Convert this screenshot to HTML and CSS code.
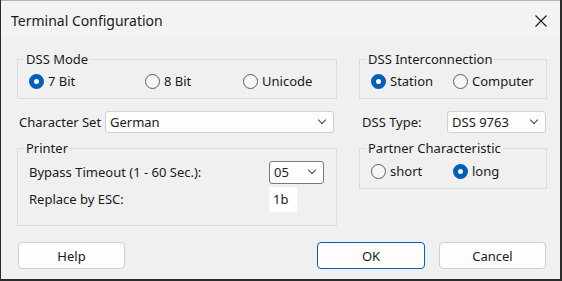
FILE: index.html
```html
<!DOCTYPE html>
<html lang="en">
<head>
    <meta charset="UTF-8">
    <title>Terminal Configuration</title>
    <link rel="stylesheet" href="styles.css">
</head>
<body>
    <div class="window">
        <div class="titlebar">
            <span class="title">Terminal Configuration</span>
            <button class="close" aria-label="Close">
                <svg width="12" height="12" viewBox="0 0 12 12">
                    <path d="M0.5 0.5 L11.5 11.5 M11.5 0.5 L0.5 11.5" stroke="#1a1a1a" stroke-width="1.1" fill="none"/>
                </svg>
            </button>
        </div>

        <div class="dialog">
            <div class="grid">
                <!-- row 1 -->
                <fieldset class="group">
                    <legend>DSS Mode</legend>
                    <div class="radios mode">
                        <label class="radio checked">7 Bit</label>
                        <label class="radio">8 Bit</label>
                        <label class="radio">Unicode</label>
                    </div>
                </fieldset>
                <fieldset class="group">
                    <legend>DSS Interconnection</legend>
                    <div class="radios pair">
                        <label class="radio checked">Station</label>
                        <label class="radio">Computer</label>
                    </div>
                </fieldset>

                <!-- row 2 -->
                <div class="field charset">
                    <span class="label">Character Set</span>
                    <div class="combo wide">German</div>
                </div>
                <div class="field dsstype">
                    <span class="label">DSS Type:</span>
                    <div class="combo short">DSS 9763</div>
                </div>

                <!-- row 3 -->
                <fieldset class="group printer">
                    <legend>Printer</legend>
                    <div class="printer-rows">
                        <span class="label">Bypass Timeout (1 - 60 Sec.):</span>
                        <div class="combo tiny">05</div>
                        <span class="label">Replace by ESC:</span>
                        <div class="edit">1b</div>
                    </div>
                </fieldset>
                <fieldset class="group partner">
                    <legend>Partner Characteristic</legend>
                    <div class="radios pair">
                        <label class="radio">short</label>
                        <label class="radio checked">long</label>
                    </div>
                </fieldset>
            </div>

            <div class="buttons">
                <button class="btn">Help</button>
                <div class="right-buttons">
                    <button class="btn default">OK</button>
                    <button class="btn">Cancel</button>
                </div>
            </div>
        </div>
    </div>
</body>
</html>
```

FILE: styles.css
```css
*, *::before, *::after {
    box-sizing: border-box;
}

body {
    margin: 0;
    background: #2b2b2b;
    font-family: 'Noto Sans', 'Open Sans', sans-serif;
    font-size: 13px;
    line-height: 19px;
    color: #1a1a1a;
}

.window {
    width: 559px;
    height: 279px;
    margin-left: 1px;
    background: #f0f0f0;
    border-top: 1px solid #b5b5b5;
    overflow: hidden;
}

.titlebar {
    height: 36px;
    background: #f3f3f3;
    display: flex;
    align-items: center;
    justify-content: space-between;
    padding-left: 10px;
    padding-right: 13px;
}

.title {
    font-size: 14px;
    padding-top: 2px;
}

.close {
    background: none;
    border: none;
    padding: 0;
    width: 12px;
    height: 12px;
    display: flex;
    margin-top: 3px;
}

.dialog {
    padding: 13px 14px 0 16px;
}

.grid {
    display: grid;
    grid-template-columns: 320px 188px;
    column-gap: 22px;
    align-items: start;
}

.group {
    margin: 0;
    border: 1px solid #dcdcdc;
    padding: 3px 11px 7px;
    min-width: 0;
}

.group legend {
    padding: 0 2px;
    margin-left: -5px;
}

.radios {
    display: grid;
}

.radios.mode {
    grid-template-columns: 116px 98px auto;
}

.radios.pair {
    grid-template-columns: 82px auto;
}

.radio {
    display: inline-flex;
    align-items: center;
    gap: 4px;
}

.radio::before {
    content: "";
    width: 15px;
    height: 15px;
    border-radius: 50%;
    border: 1px solid #5d5d5d;
    background: #f6f6f6;
    flex-shrink: 0;
}

.radio.checked::before {
    border: 5px solid #005fb8;
    background: #ffffff;
}

.field {
    display: flex;
    align-items: center;
    margin-top: 12px;
}

.charset .label {
    width: 88px;
    padding-left: 2px;
    white-space: nowrap;
}

.dsstype .label {
    width: 88px;
    padding-left: 3px;
}

.combo {
    position: relative;
    height: 22px;
    background: #fdfdfd;
    border: 1px solid #d0d0d0;
    border-radius: 3px;
    padding-left: 4px;
    display: flex;
    align-items: center;
}

.combo::after {
    content: "";
    position: absolute;
    right: 8px;
    top: 5px;
    width: 6px;
    height: 6px;
    border-right: 1px solid #444;
    border-bottom: 1px solid #444;
    transform: rotate(45deg);
}

.combo.wide {
    width: 229px;
}

.combo.short {
    width: 99px;
}

.combo.tiny {
    width: 55px;
    height: 23px;
    border-color: #7a7a7a;
}

.printer {
    margin-top: 6px;
    padding: 3px 11px 13px;
}

.partner {
    margin-top: 6px;
    padding: 4px 11px 7px;
}

.printer-rows {
    display: grid;
    grid-template-columns: 240px auto;
    row-gap: 3px;
    align-items: center;
    justify-items: start;
}

.edit {
    width: 28px;
    height: 25px;
    background: #ffffff;
    padding-left: 4px;
    display: flex;
    align-items: center;
}

.buttons {
    display: flex;
    justify-content: space-between;
    margin-top: 16px;
    padding-left: 1px;
}

.right-buttons {
    display: flex;
    gap: 14px;
}

.btn {
    width: 107px;
    height: 27px;
    font-family: inherit;
    font-size: 13px;
    color: #1a1a1a;
    background: #fdfdfd;
    border: 1px solid #d0d0d0;
    border-radius: 4px;
    padding: 0;
}

.btn.default {
    width: 108px;
    border-color: #005fb8;
}
```
